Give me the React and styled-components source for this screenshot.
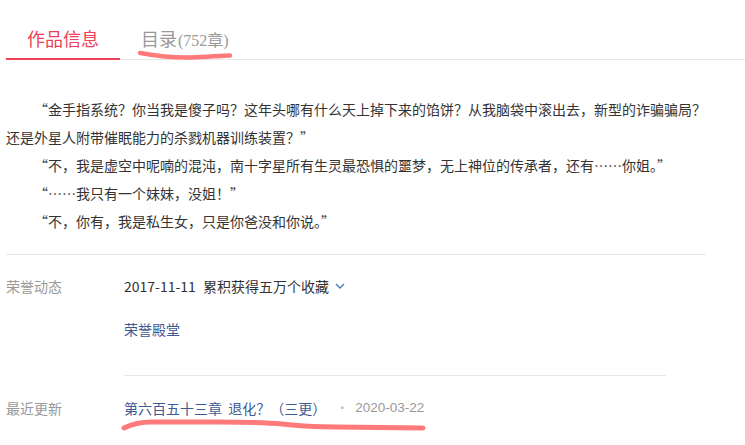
import React from "react";
import styled, { createGlobalStyle } from "styled-components";

const GlobalStyle = createGlobalStyle`
  html, body {
    margin: 0;
    padding: 0;
    background: #ffffff;
    min-height: 100%;
  }
  body {
    font-family: "Noto Sans CJK SC", "Noto Sans", sans-serif;
    color: #333333;
  }
`;

const Page = styled.div`
  padding-left: 6px;
  padding-bottom: 30px;
  min-height: 445px;
  box-sizing: border-box;
`;

const TabBar = styled.div`
  display: flex;
  height: 60px;
  box-sizing: border-box;
  border-bottom: 1px solid #e6e6e6;
`;

const Tab = styled.div`
  position: relative;
  box-sizing: border-box;
  height: 60px;
  margin-bottom: -1px;
  padding: 26px 21px 0;
  ${(p) => (p.$width ? `width: ${p.$width}px;` : "")}
  text-align: center;
  font-size: 18px;
  line-height: 24px;
  white-space: nowrap;
  color: ${(p) => (p.$active ? "#ed4259" : "#999999")};
  border-bottom: 2px solid ${(p) => (p.$active ? "#ed4259" : "transparent")};
`;

const Count = styled.span`
  font-family: "Liberation Serif", "Noto Sans CJK SC", serif;
  font-size: 16px;
  margin-left: 1px;
`;

const Scribble = styled.svg`
  position: absolute;
  left: ${(p) => p.$left}px;
  top: ${(p) => p.$top}px;
  z-index: 2;
  overflow: visible;
  pointer-events: none;
  path {
    fill: none;
    stroke: #ff7b7b;
    stroke-linecap: round;
    stroke-linejoin: round;
  }
`;

const Synopsis = styled.div`
  width: 702px;
  padding-top: 35px;
  font-size: 14px;
  line-height: 28px;
  color: #333333;
  p {
    margin: 0;
    text-indent: 2em;
  }
`;

const Divider = styled.div`
  width: ${(p) => p.$width}px;
  height: 1px;
  background: #e6e6e6;
  margin-top: ${(p) => p.$top}px;
`;

const InfoRow = styled.div`
  display: grid;
  grid-template-columns: 118px 1fr;
  margin-top: ${(p) => p.$top}px;
  font-size: 14px;
  line-height: 20px;
`;

const Label = styled.div`
  color: #999999;
`;

const RowBody = styled.div`
  display: flex;
  flex-direction: column;
  align-items: flex-start;
`;

const HonorLine = styled.div`
  display: flex;
  align-items: center;
  color: #333333;
`;

const HonorDate = styled.span`
  margin-right: 7px;
`;

const Chevron = styled.svg`
  margin-left: 6px;
  width: 10px;
  height: 6px;
  polyline {
    fill: none;
    stroke: #4c7ac4;
    stroke-width: 1.4;
  }
`;

const Link = styled.a`
  color: #3e5a94;
  text-decoration: none;
  margin-top: ${(p) => p.$top || 0}px;
`;

const UpdateLine = styled.div`
  position: relative;
  display: flex;
  align-items: center;
  padding-bottom: 14px;
`;

const Dot = styled.span`
  color: #bbbbbb;
  font-size: 12px;
  margin: 0 7px 0 10px;
`;

const UpdateDate = styled.span`
  font-family: "Liberation Sans", Arial, sans-serif;
  color: #999999;
  font-size: 13.5px;
`;

export default function App() {
  return (
    <>
      <GlobalStyle />
      <Page>
        <TabBar>
          <Tab $active $width={114}>作品信息</Tab>
          <Tab>
            目录<Count>(752章)</Count>
            <Scribble $left={17} $top={50} width="96" height="10" viewBox="0 0 96 10">
              <path d="M3 3 C 20 6, 40 8, 55 7.5 S 85 5.5, 93 5.5" strokeWidth="4.5" />
            </Scribble>
          </Tab>
        </TabBar>

        <Synopsis>
          <p>“金手指系统？你当我是傻子吗？这年头哪有什么天上掉下来的馅饼？从我脑袋中滚出去，新型的诈骗骗局？还是外星人附带催眠能力的杀戮机器训练装置？”</p>
          <p>“不，我是虚空中呢喃的混沌，南十字星所有生灵最恐惧的噩梦，无上神位的传承者，还有……你姐。”</p>
          <p>“……我只有一个妹妹，没姐！”</p>
          <p>“不，你有，我是私生女，只是你爸没和你说。”</p>
        </Synopsis>

        <Divider $width={700} $top={19} />

        <InfoRow $top={21}>
          <Label>荣誉动态</Label>
          <RowBody>
            <HonorLine>
              <HonorDate>2017-11-11</HonorDate>
              累积获得五万个收藏
              <Chevron viewBox="0 0 10 6">
                <polyline points="1,1 5,5 9,1" />
              </Chevron>
            </HonorLine>
            <Link href="#" $top={23}>荣誉殿堂</Link>
            <Divider $width={542} $top={36} />
          </RowBody>
        </InfoRow>

        <InfoRow $top={22}>
          <Label>最近更新</Label>
          <RowBody>
            <UpdateLine>
              <Link href="#">第六百五十三章&nbsp;&nbsp;退化？（三更）</Link>
              <Dot>·</Dot>
              <UpdateDate>2020-03-22</UpdateDate>
              <Scribble $left={-2} $top={19} width="306" height="14" viewBox="0 0 306 14">
                <path
                  d="M2 11 C 10 7, 18 5, 30 5 L 95 5 C 120 5, 140 5, 160 7 C 185 10, 200 10, 215 10 L 301 11"
                  strokeWidth="5"
                />
              </Scribble>
            </UpdateLine>
          </RowBody>
        </InfoRow>
      </Page>
    </>
  );
}
